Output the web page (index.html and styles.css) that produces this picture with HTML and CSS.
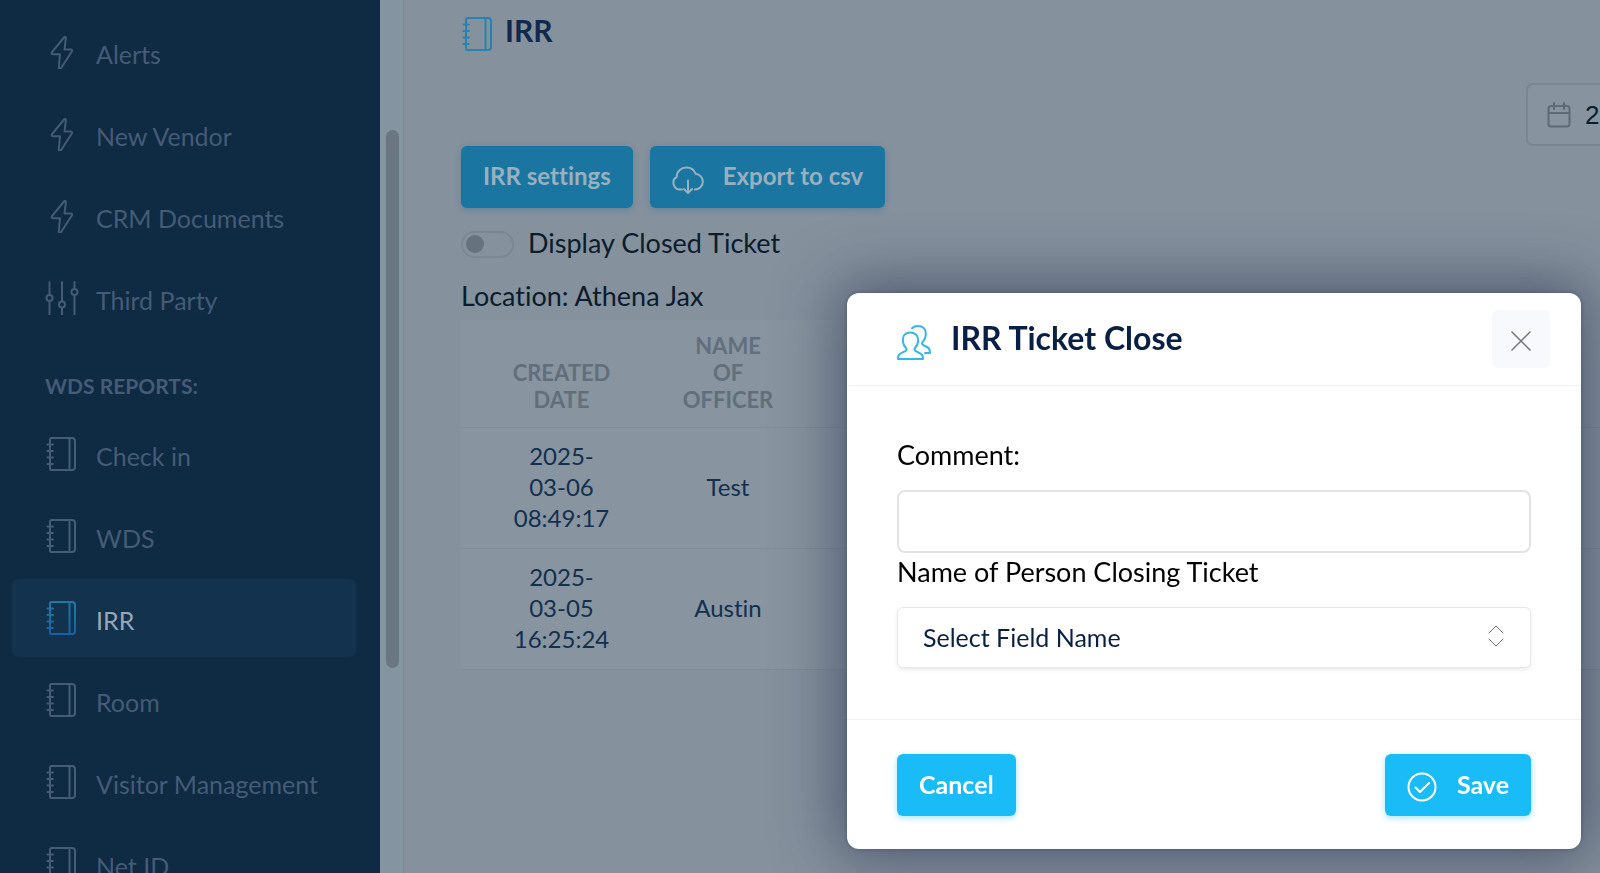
FILE: index.html
```html
<!DOCTYPE html>
<html lang="en">
<head>
    <meta charset="UTF-8">
    <meta name="viewport" content="width=device-width, initial-scale=1.0">
    <title>IRR</title>
    <link rel="stylesheet" href="styles.css">
</head>
<body>
    <svg class="sprite" aria-hidden="true">
        <defs>
            <linearGradient id="blue" x1="0" y1="0" x2="0" y2="34" gradientUnits="userSpaceOnUse">
                <stop offset="0" stop-color="#1f7ba3"/>
                <stop offset="1" stop-color="#1a5fa3"/>
            </linearGradient>
            <symbol id="bolt" viewBox="-1 -1 34 34">
                <path d="M18 1.500c.7-1 2-.5 1.900.7L18.500 13.500h6.300c1.200 0 1.600 1 1 2L15 32.200c-.8 1.100-2.300.7-2.200-.7l1.200-13.300H7c-1.200 0-1.700-1.100-1-2.100z"/>
            </symbol>
            <symbol id="sliders" viewBox="0 0 34 34">
                <path d="M4.500 1v13M4.500 20v13.500M17 1v19M17 27v6.500M29.500 1v7M29.500 14.500v19"/>
                <circle cx="4.500" cy="17" r="3"/>
                <circle cx="17" cy="23.500" r="3"/>
                <circle cx="29.500" cy="11" r="3"/>
            </symbol>
            <symbol id="book" viewBox="0 0 34 34">
                <path d="M5 5V2.500a1.500 1.500 0 0 1 1.500-1.500h20.500a3 3 0 0 1 3 3v26a3 3 0 0 1-3 3H6.500a1.500 1.500 0 0 1-1.500-1.500V5M24.500 1v32M2.500 7.500h5.500M2.500 14h5.500M2.500 20.500h5.500M2.500 27h5.500"/>
            </symbol>
        </defs>
    </svg>

    <nav class="sidebar">
        <a class="item" href="#"><svg class="icon"><use href="#bolt"/></svg><span>Alerts</span></a>
        <a class="item" href="#"><svg class="icon"><use href="#bolt"/></svg><span>New Vendor</span></a>
        <a class="item" href="#"><svg class="icon"><use href="#bolt"/></svg><span>CRM Documents</span></a>
        <a class="item" href="#"><svg class="icon"><use href="#sliders"/></svg><span>Third Party</span></a>
        <h2 class="group">WDS REPORTS:</h2>
        <a class="item" href="#"><svg class="icon"><use href="#book"/></svg><span>Check in</span></a>
        <a class="item" href="#"><svg class="icon"><use href="#book"/></svg><span>WDS</span></a>
        <a class="item active" href="#"><svg class="icon"><use href="#book"/></svg><span>IRR</span></a>
        <a class="item" href="#"><svg class="icon"><use href="#book"/></svg><span>Room</span></a>
        <a class="item" href="#"><svg class="icon"><use href="#book"/></svg><span>Visitor Management</span></a>
        <a class="item" href="#"><svg class="icon"><use href="#book"/></svg><span>Net ID</span></a>
    </nav>
    <div class="scrollbar"><div class="thumb"></div></div>

    <main class="main">
        <header class="page-title">
            <svg class="icon"><use href="#book"/></svg>
            <h1>IRR</h1>
        </header>
        <div class="filters">
            <button class="date" type="button">
                <svg class="calendar" viewBox="0 0 24 26"><rect x="1.500" y="4" width="21" height="20.500" rx="2.500"/><path d="M1.500 11h21M7 1v6M17 1v6"/></svg>
                <span>2</span>
            </button>
        </div>
        <div class="actions">
            <button class="btn dim" type="button">IRR settings</button>
            <button class="btn dim" type="button">
                <svg class="cloud" viewBox="0 0 32 28"><path d="M10 23.500H8a6.800 6.800 0 0 1-3.300-12.600C4.600 5.500 9 1.500 14.500 1.500c4.300 0 7.800 2.400 9.100 6.300 4.200.4 7.200 3.700 7.200 7.900 0 4.300-3.400 7.800-8.100 7.800M16 14.500V27M12 23l4 4 4-4"/></svg>
                Export to csv
            </button>
        </div>
        <label class="switch">
            <input type="checkbox">
            <span>Display Closed Ticket</span>
        </label>
        <p class="location">Location: Athena Jax</p>
        <table class="tickets">
            <thead>
                <tr><th>CREATED<br>DATE</th><th>NAME<br>OF<br>OFFICER</th><th></th></tr>
            </thead>
            <tbody>
                <tr><td>2025-<br>03-06<br>08:49:17</td><td>Test</td><td></td></tr>
                <tr><td>2025-<br>03-05<br>16:25:24</td><td>Austin</td><td></td></tr>
            </tbody>
        </table>
    </main>

    <div class="overlay">
        <form class="modal" role="dialog" aria-labelledby="modal-title">
            <header class="modal-header">
                <svg class="users" viewBox="0 0 34 36"><path d="M13 7.500c-4.300 0-7.200 3-7.200 7.500 0 3.700 1.500 6.300 3.400 8.300.7 1.100.3 2.200-1 2.900L3 28.800c-1.600.9-2 2.400-2 5.200h25c0-2.800-.5-4.300-2-5.200l-5.200-2.600c-1.300-.7-1.700-1.800-1-2.900 1.900-2 3.400-4.600 3.400-8.300 0-4.500-3.200-7.500-8.200-7.500zM15 3.200C16.500 1.800 18.500 1 21 1c4.800 0 7.800 3 7.800 7.500 0 3.700-1.500 6.700-3.400 8.700-.7 1.100-.4 2.200.9 2.900l4.500 2.400c1.700.9 2.200 2.400 2.200 5.500h-5"/></svg>
                <h2 id="modal-title">IRR Ticket Close</h2>
                <button class="close" type="button" aria-label="Close">
                    <svg viewBox="0 0 20 20"><path d="M1 1l18 18M19 1L1 19"/></svg>
                </button>
            </header>
            <div class="modal-body">
                <label for="comment">Comment:</label>
                <input class="field" type="text" id="comment">
                <label for="person">Name of Person Closing Ticket</label>
                <div class="select-wrap">
                    <select class="field" id="person">
                        <option>Select Field Name</option>
                    </select>
                    <svg class="arrows" viewBox="0 0 16 22"><path d="M1 8l7-7 7 7M1 14l7 7 7-7"/></svg>
                </div>
            </div>
            <footer class="modal-footer">
                <button class="btn" type="button">Cancel</button>
                <button class="btn" type="submit">
                    <svg class="check" viewBox="0 0 30 30"><circle cx="15" cy="15" r="13.500"/><path d="M8.500 15.500l4.500 4.500 9-9"/></svg>
                    Save
                </button>
            </footer>
        </form>
    </div>
</body>
</html>
```

FILE: styles.css
```css
* {
    box-sizing: border-box;
}
body {
    margin: 0;
    display: flex;
    height: 100vh;
    overflow: hidden;
    background: #85919d;
    color: #0b1c2c;
    font-family: Lato, "Open Sans", sans-serif;
    font-size: 26px;
    line-height: 32px;
    font-variant-ligatures: none;
}
h1, h2, p {
    margin: 0;
}
button, input, select {
    font: inherit;
}
svg {
    flex: none;
    fill: none;
    stroke: currentColor;
    stroke-width: 2;
    stroke-linecap: round;
    stroke-linejoin: round;
}
.sprite {
    position: absolute;
    width: 0;
    height: 0;
}
.icon {
    width: 34px;
    height: 34px;
}

/* sidebar */
.sidebar {
    flex: 0 0 380px;
    display: flex;
    flex-direction: column;
    gap: 4px;
    padding: 13px 24px 0 12px;
    background: #0f2a43;
    overflow: hidden;
}
.item {
    flex: none;
    display: flex;
    align-items: center;
    gap: 17px;
    height: 78px;
    padding: 0 33px;
    border-radius: 6px;
    color: #455b76;
    font-size: 25px;
    text-decoration: none;
    white-space: nowrap;
}
.item span {
    padding-top: 4px;
}
.item.active {
    background: #12324e;
    color: #98a7b4;
}
.item.active .icon {
    stroke: url(#blue);
}
.group {
    flex: none;
    padding: 29px 33px 9px;
    color: #455b76;
    font-size: 21px;
    font-weight: 700;
}
.scrollbar {
    flex: 0 0 24px;
    padding: 130px 4px 0 6px;
    background: #8494a1;
    border-right: 1px solid #7f8b97;
}
.thumb {
    height: 538px;
    border-radius: 7px;
    background: #6a7682;
}

/* page */
.main {
    flex: 1;
    min-width: 0;
    padding: 12px 0 0 57px;
    overflow: hidden;
}
.page-title {
    display: flex;
    gap: 10px;
    height: 71px;
    color: #11294a;
}
.page-title .icon {
    margin-top: 5px;
    color: #2883b0;
}
.page-title h1 {
    font-size: 30px;
    line-height: 36px;
    font-weight: 700;
}
.filters {
    display: flex;
    justify-content: flex-end;
    margin-right: -226px;
    height: 63px;
}
.date {
    display: flex;
    align-items: center;
    gap: 14px;
    width: 300px;
    padding: 0 19px;
    border: 2px solid #7a8692;
    border-radius: 7px;
    background: #87939f;
    color: #0b1c2c;
    font-family: "Liberation Sans", Arial, sans-serif;
}
.calendar {
    width: 24px;
    height: 26px;
    color: #5e6a76;
}
.actions {
    display: flex;
    gap: 17px;
}
.btn {
    display: flex;
    align-items: center;
    height: 62px;
    padding: 0 22px 2px;
    border: 0;
    border-radius: 6px;
    background: #1abcf8;
    box-shadow: 0 2px 6px rgba(26, 188, 248, 0.4);
    color: #fff;
    font-size: 25px;
    font-weight: 700;
    white-space: nowrap;
    cursor: pointer;
}
.btn.dim {
    background: #1a76a0;
    color: #98b0bf;
    font-size: 24px;
    box-shadow: 0 2px 6px rgba(26, 100, 150, 0.3);
}
.cloud {
    width: 32px;
    height: 28px;
    margin: 8px 19px 0 0;
}
.switch {
    display: flex;
    align-items: center;
    gap: 14px;
    margin-top: 19px;
    font-size: 27px;
}
.switch input {
    appearance: none;
    display: flex;
    align-items: center;
    width: 53px;
    height: 27px;
    margin: 2px 0 0;
    padding: 3px;
    border: 2px solid #7b8793;
    border-radius: 14px;
}
.switch input::before {
    content: "";
    width: 18px;
    height: 18px;
    border-radius: 50%;
    background: #66727e;
}
.location {
    margin: 21px 0 8px;
    font-size: 27px;
}
.tickets {
    width: 100%;
    border-collapse: collapse;
    table-layout: fixed;
    background: #88949f;
    color: #12304f;
    font-size: 24px;
    line-height: 31px;
    text-align: center;
}
.tickets th:nth-child(1) {
    width: 201px;
}
.tickets th:nth-child(2) {
    width: 132px;
}
.tickets th {
    padding: 12px 0 14px;
    color: #616f7d;
    font-size: 22px;
    line-height: 27px;
    font-weight: 700;
    vertical-align: bottom;
}
.tickets td {
    padding: 12px 0 15px;
}
.tickets tr {
    border-bottom: 1px solid #808c97;
}

/* modal */
.overlay {
    position: fixed;
    inset: 0;
    display: flex;
    justify-content: flex-end;
    align-items: flex-start;
    padding: 293px 19px 24px;
}
.modal {
    width: 734px;
    border-radius: 12px;
    background: #fff;
    box-shadow: 0 0 60px 10px rgba(42, 52, 80, 0.6), 0 0 4px rgba(20, 35, 60, 0.3);
    color: #000;
}
.modal-header {
    display: flex;
    align-items: flex-start;
    padding: 17px 31px 17px 50px;
    border-bottom: 1px solid #f0f1f2;
    color: #0a1f44;
}
.users {
    width: 34px;
    height: 36px;
    margin-top: 15px;
    color: #35b5ea;
}
.modal-header h2 {
    flex: 1;
    margin: 10px 0 0 20px;
    font-size: 32px;
    line-height: 36px;
}
.close {
    display: flex;
    align-items: center;
    justify-content: center;
    width: 58px;
    height: 58px;
    padding: 4px 0 0;
    border: 0;
    border-radius: 6px;
    background: #f7f9fc;
    color: #70757f;
    cursor: pointer;
}
.close svg {
    width: 20px;
    height: 20px;
    stroke-width: 1.500;
}
.modal-body {
    padding: 53px 50px 51px;
}
.modal-body label {
    display: block;
    font-size: 27px;
}
.field {
    display: block;
    width: 100%;
    height: 63px;
    margin: 19px 0 3px;
    padding: 0 25px;
    border: 2px solid #e2e3e5;
    border-radius: 8px;
    background: #fff;
}
select.field {
    appearance: none;
    height: 61px;
    margin-bottom: 0;
    padding-bottom: 2px;
    border: 1px solid #e6e8ea;
    border-radius: 6px;
    box-shadow: 0 2px 4px rgba(0, 0, 0, 0.08);
    color: #0a1f44;
    font-size: 25px;
}
.select-wrap {
    position: relative;
}
.arrows {
    position: absolute;
    right: 27px;
    top: 18px;
    width: 16px;
    height: 22px;
    color: #70747a;
    stroke-width: 1;
}
.modal-footer {
    display: flex;
    justify-content: space-between;
    padding: 34px 50px 33px;
    border-top: 1px solid #f0f1f2;
}
.check {
    width: 30px;
    height: 30px;
    margin: 5px 20px 0 0;
}
```
